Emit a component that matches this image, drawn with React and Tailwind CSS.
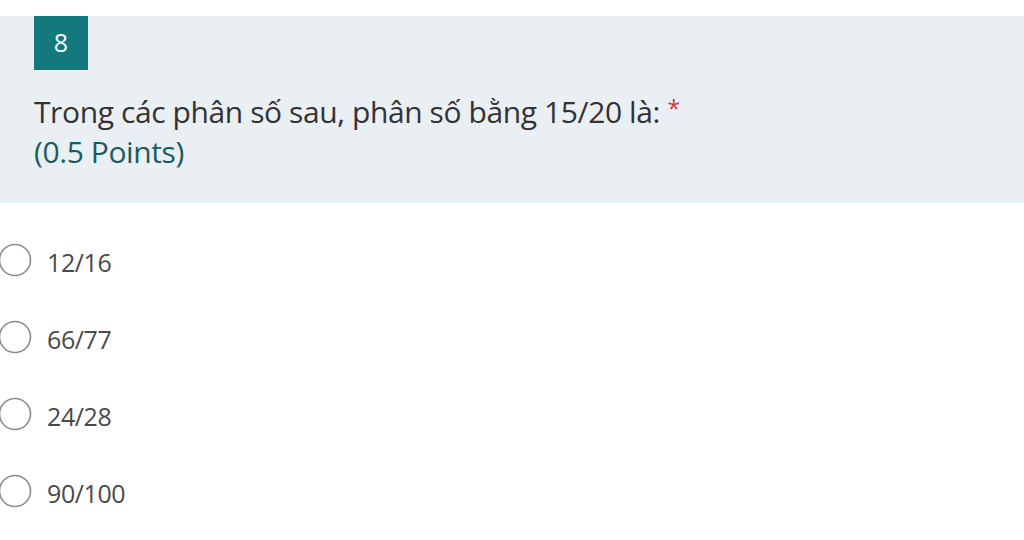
import React from "react";

const options = ["12/16", "66/77", "24/28", "90/100"];

const Radio = () => (
  <svg width="34" height="34" viewBox="0 0 34 34" className="shrink-0 -translate-y-[3px]">
    <circle cx="17" cy="17" r="15.5" fill="white" stroke="#8a8a8a" strokeWidth="1.6" />
  </svg>
);

export default function App() {
  return (
    <div
      className="w-[1024px] h-[540px] overflow-hidden bg-white pt-4"
      style={{ fontFamily: '"Open Sans", "Noto Sans", sans-serif' }}
    >
      {/* question header */}
      <div className="h-[187px] bg-[#eaeff3] pl-[34px]">
        <div className="flex h-[54px] w-[54px] items-center justify-center bg-[#13797c] text-[25px] text-white">
          8
        </div>
        <div className="mt-[18px] text-[30px] leading-[40px] text-[#333333] tracking-[-0.4px]">
          Trong các phân số sau, phân số bằng 15/20 là:{" "}
          <span className="align-[6px] text-[23px] text-[#d0353b]">*</span>
        </div>
        <div className="text-[30px] leading-[40px] text-[#195c5e] tracking-[-0.4px]">
          (0.5 Points)
        </div>
      </div>

      {/* options */}
      <div className="ml-[-2px] mt-[43px] flex flex-col gap-[43px]">
        {options.map((o) => (
          <div key={o} className="flex h-[34px] items-center gap-[15px]">
            <Radio />
            <span className="text-[25px] text-[#4a4a4a] tracking-[-0.4px]">{o}</span>
          </div>
        ))}
      </div>
    </div>
  );
}
